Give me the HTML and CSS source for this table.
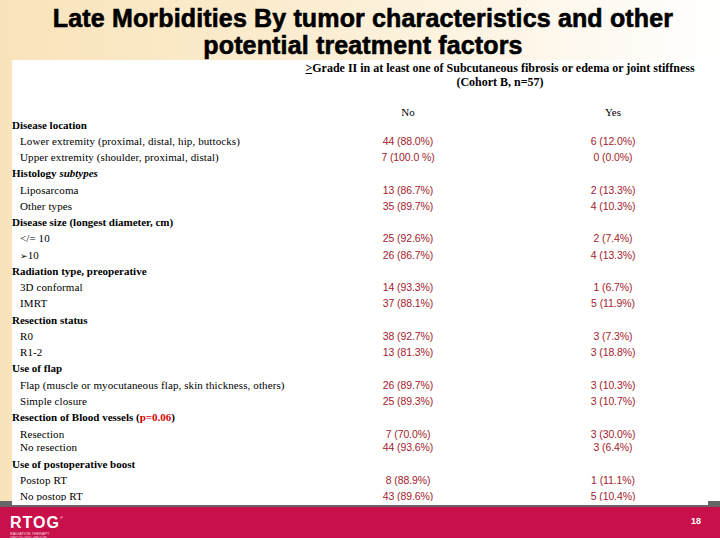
FILE: index.html
```html
<!DOCTYPE html>
<html>
<head>
<meta charset="utf-8">
<link rel="stylesheet" href="styles.css">
</head>
<body>
<div class="slide">
  <header class="title">
    <h1>Late Morbidities By tumor characteristics and other<br>potential treatment factors</h1>
  </header>
  <main class="panel">
    <div class="thead">
      <div class="thead-line"><u>&gt;</u>Grade II in at least one of Subcutaneous fibrosis or edema or joint stiffness</div>
      <div class="thead-line">(Cohort B, n=57)</div>
    </div>
    <div class="row colhead"><span></span><span class="c">No</span><span></span><span class="c">Yes</span></div>
    <div class="row cat first"><span>Disease location</span></div>
    <div class="row"><span class="sub">Lower extremity (proximal, distal, hip, buttocks)</span><span class="n">44 (88.0%)</span><span></span><span class="n">6 (12.0%)</span></div>
    <div class="row"><span class="sub">Upper extremity (shoulder, proximal, distal)</span><span class="n">7 (100.0 %)</span><span></span><span class="n">0 (0.0%)</span></div>
    <div class="row cat"><span>Histology <i>subtypes</i></span></div>
    <div class="row"><span class="sub">Liposarcoma</span><span class="n">13 (86.7%)</span><span></span><span class="n">2 (13.3%)</span></div>
    <div class="row"><span class="sub">Other types</span><span class="n">35 (89.7%)</span><span></span><span class="n">4 (10.3%)</span></div>
    <div class="row cat"><span>Disease size (longest diameter, cm)</span></div>
    <div class="row"><span class="sub">&lt;/= 10</span><span class="n">25 (92.6%)</span><span></span><span class="n">2 (7.4%)</span></div>
    <div class="row"><span class="sub"><span class="arrow">➢</span>10</span><span class="n">26 (86.7%)</span><span></span><span class="n">4 (13.3%)</span></div>
    <div class="row cat"><span>Radiation type, preoperative</span></div>
    <div class="row"><span class="sub">3D conformal</span><span class="n">14 (93.3%)</span><span></span><span class="n">1 (6.7%)</span></div>
    <div class="row"><span class="sub">IMRT</span><span class="n">37 (88.1%)</span><span></span><span class="n">5 (11.9%)</span></div>
    <div class="row cat"><span>Resection status</span></div>
    <div class="row"><span class="sub">R0</span><span class="n">38 (92.7%)</span><span></span><span class="n">3 (7.3%)</span></div>
    <div class="row"><span class="sub">R1-2</span><span class="n">13 (81.3%)</span><span></span><span class="n">3 (18.8%)</span></div>
    <div class="row cat"><span>Use of flap</span></div>
    <div class="row"><span class="sub">Flap (muscle or myocutaneous flap, skin thickness, others)</span><span class="n">26 (89.7%)</span><span></span><span class="n">3 (10.3%)</span></div>
    <div class="row"><span class="sub">Simple closure</span><span class="n">25 (89.3%)</span><span></span><span class="n">3 (10.7%)</span></div>
    <div class="row cat"><span>Resection of Blood vessels (<span class="pval">p=0.06</span>)</span></div>
    <div class="row"><span class="sub">Resection</span><span class="n">7 (70.0%)</span><span></span><span class="n">3 (30.0%)</span></div>
    <div class="row tight"><span class="sub">No resection</span><span class="n">44 (93.6%)</span><span></span><span class="n">3 (6.4%)</span></div>
    <div class="row cat loose"><span>Use of postoperative boost</span></div>
    <div class="row"><span class="sub">Postop RT</span><span class="n">8 (88.9%)</span><span></span><span class="n">1 (11.1%)</span></div>
    <div class="row"><span class="sub">No postop RT</span><span class="n">43 (89.6%)</span><span></span><span class="n">5 (10.4%)</span></div>
  </main>
  <div class="rule"><div class="rule-inner"></div></div>
  <footer class="footer">
    <div class="logo">
      <div class="logo-word">RTOG<sup>®</sup></div>
      <div class="logo-sub">Radiation Therapy<br>Oncology Group</div>
    </div>
    <div class="page">18</div>
  </footer>
</div>
</body>
</html>
```

FILE: styles.css
```css
html, body {
  margin: 0;
  padding: 0;
  background: #ffffff;
}
.slide {
  width: 720px;
  height: 540px;
  background: linear-gradient(to right, #f9e3bb 0%, #fbebcc 35%, #fdf5e6 70%, #ffffff 100%);
  display: flex;
  flex-direction: column;
  overflow: hidden;
}
.title {
  height: 60px;
  flex: none;
}
.title h1 {
  margin: 0;
  padding: 5px 0 0 6px;
  text-align: center;
  font-family: "Liberation Sans", Arial, sans-serif;
  font-weight: bold;
  font-size: 25px;
  line-height: 27px;
  letter-spacing: 0.15px;
  -webkit-text-stroke: 0.6px #000;
  color: #000;
}
.panel {
  margin-left: 12px;
  height: 441px;
  flex: none;
  background: #ffffff;
  font-family: "Liberation Serif", "Times New Roman", serif;
  font-size: 11px;
  color: #000;
}
.thead {
  padding: 1px 0 0 268px;
  text-align: center;
  font-weight: bold;
  font-size: 12px;
  line-height: 14px;
}
.thead u {
  text-decoration: underline;
}
.row {
  display: grid;
  grid-template-columns: 336px 120px 85px 120px;
  line-height: 13px;
  height: 13px;
  padding-top: 3.28px;
  white-space: nowrap;
}
.row.colhead {
  padding-top: 16.5px;
}
.row.first {
  padding-top: 0;
}
.row.tight {
  padding-top: 0;
}
.row.loose {
  padding-top: 4px;
}
.cat {
  font-weight: bold;
}
.sub {
  padding-left: 8px;
  letter-spacing: 0.1px;
}
.c {
  text-align: center;
}
.n {
  text-align: center;
  font-family: "Liberation Sans", Arial, sans-serif;
  font-size: 10.5px;
  letter-spacing: -0.1px;
  color: #a3222d;
}
.arrow {
  font-family: "DejaVu Sans", sans-serif;
  font-size: 9px;
}
.pval {
  color: #d40000;
}
.rule {
  height: 6px;
  flex: none;
  background: #676767;
}
.rule-inner {
  height: 4px;
  margin: 0 12px;
  background: #ffffff;
}
.footer {
  height: 31px;
  flex: none;
  background: #c8104a;
  border-bottom: 2px solid #ffffff;
  display: flex;
  justify-content: space-between;
  align-items: flex-start;
  color: #ffffff;
}
.logo {
  padding: 1px 0 0 10px;
  font-family: "Liberation Sans", Arial, sans-serif;
}
.logo-word {
  font-weight: bold;
  font-size: 16px;
  line-height: 19px;
  letter-spacing: 1px;
}
.logo-word sup {
  font-size: 4px;
  vertical-align: 9px;
  font-weight: normal;
  letter-spacing: 0;
}
.logo-sub {
  font-size: 3.5px;
  line-height: 4px;
  text-transform: uppercase;
  letter-spacing: 0.2px;
  opacity: 0.85;
}
.page {
  padding: 9px 19px 0 0;
  font-family: "Liberation Sans", Arial, sans-serif;
  font-weight: bold;
  font-size: 9px;
  line-height: 10px;
}
```
